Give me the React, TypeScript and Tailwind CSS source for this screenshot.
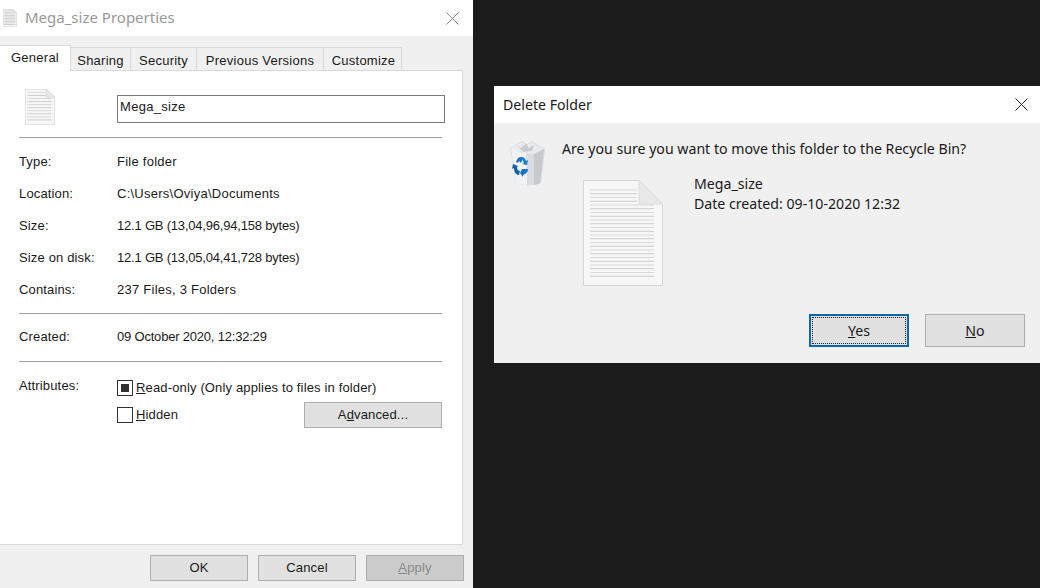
import { ReactNode } from "react";

const bigLines = Array.from({ length: 24 }, (_, i) => 10 + i * 3.75);
const smallLines = [10, 19, 28, 37, 46, 55, 64, 73, 82, 91];

const DocIcon = ({ className, lines = bigLines }: { className: string; lines?: number[] }) => (
  <svg viewBox="0 0 80 106" preserveAspectRatio="none" className={className}>
    <path d="M.5.5H56L79.5 24V105.5H.5Z" fill="#f7f7f7" stroke="#d6d6d6" vectorEffect="non-scaling-stroke" />
    <path d="M56 .5V24H79.5Z" fill="#e8e8e8" stroke="#dcdcdc" vectorEffect="non-scaling-stroke" />
    {lines.map((y, i) => (
      <path
        key={y}
        d={y < 24 ? `M7 ${y}H54` : `M7 ${y}H71`}
        stroke={i % 2 ? "#cdcdcd" : "#d9d9d9"}
        strokeWidth="1"
        vectorEffect="non-scaling-stroke"
      />
    ))}
  </svg>
);

const RecycleBin = () => (
  <svg viewBox="0 0 36 46" className="w-[36px] h-[46px]">
    <path d="M0 8 12 1l5 3 5-3 6 4 7 4-4 34c-6 3-18 3-25 0Z" fill="#d9dcde" />
    <path d="M1 8 12 2l5 3 5-3 5 4 7 3-10 5-14-1Z" fill="#e9ebec" />
    <path d="M7 5l4 3 5-4 3 4 5-3-2 6-9 1Z" fill="#c9cccf" />
    <path d="M1 8l10 5 5 .5L17 45c-5 0-8-1-11-2Z" fill="#f1f2f3" />
    <path d="M24 14 34 9l-4 34-6 2Z" fill="#c6cacd" />
    <path d="M6 22c1-3 2-5 5-5l2 1-2 5-2-2-1 2Z" fill="#1b74c4" />
    <path d="M12 17c2 0 3 1 4 4l2-1-1 5-5-1 2-1-2-4Z" fill="#1e7fd0" />
    <path d="M3 24l5 2-1 1c0 2 1 4 3 4l-1 4c-3 0-5-3-5-7l-2 1Z" fill="#135fa8" />
    <path d="M12 29h6c0 3-2 5-5 6v2l-3-4 2-4Z" fill="#1b74c4" />
  </svg>
);

const CloseX = ({ color }: { color: string }) => (
  <svg viewBox="0 0 13 13" className="w-[13px] h-[13px]">
    <path d="M.5.5l12 12M12.5.5l-12 12" stroke={color} strokeWidth="1" fill="none" />
  </svg>
);

const Row = ({
  label,
  children,
  numeric = false,
}: {
  label: string;
  children: ReactNode;
  numeric?: boolean;
}) => (
  <div className="flex h-[32px] items-center">
    <div className="w-[98px]">{label}</div>
    <div className={numeric ? "tracking-[-0.2px]" : "tracking-[0.25px]"}>{children}</div>
  </div>
);

const Rule = () => <div className="h-px bg-[#a0a0a0]" />;

const WinButton = ({
  children,
  className = "bg-[#e1e1e1]",
  width = "w-[98px]",
  height = "h-[26px]",
}: {
  children: ReactNode;
  className?: string;
  width?: string;
  height?: string;
}) => (
  <div className={`flex items-center justify-center border border-[#adadad] ${width} ${height} ${className}`}>
    {children}
  </div>
);

const tabs = [
  { name: "Sharing", width: "w-[60px]" },
  { name: "Security", width: "w-[66px]" },
  { name: "Previous Versions", width: "w-[127px]" },
  { name: "Customize", width: "w-[78px] pl-[2px]" },
];

export default function App() {
  return (
    <div className="flex w-[1040px] h-[588px] overflow-hidden bg-[#1b1b1b] text-[13px] tracking-[0.15px] text-[#1a1a1a] font-['Liberation_Sans',sans-serif]">
      {/* Properties window */}
      <div className="flex flex-col w-[473px] h-full shrink-0 bg-[#f0f0f0]">
        <div className="flex items-center h-[36px] bg-white pl-[3px] pr-[14px]">
          <DocIcon className="w-[14px] h-[18px]" lines={smallLines} />
          <span className="ml-[8px] -mt-[1px] text-[15px] tracking-normal text-[#999999] font-['Noto_Sans',sans-serif]">
            Mega_size Properties
          </span>
          <div className="ml-auto">
            <CloseX color="#8a8a8a" />
          </div>
        </div>

        <div className="flex items-end h-[34px] pr-[11px] tracking-[0.25px]">
          <div className="relative z-10 flex items-center justify-center w-[71px] h-[26px] -mb-px pb-[1px] bg-white border-t border-r border-[#d9d9d9]">
            General
          </div>
          {tabs.map((tab) => (
            <div
              key={tab.name}
              className={`flex items-center justify-center h-[23px] pt-[3px] border-t border-r border-[#d9d9d9] bg-[#f0f0f0] ${tab.width}`}
            >
              {tab.name}
            </div>
          ))}
        </div>

        <div className="w-[463px] h-[475px] bg-white border-t border-r border-b border-[#d9d9d9] pl-[19px] pr-[20px]">
          <div className="flex h-[66px] pt-[18px]">
            <DocIcon className="ml-[6px] w-[30px] h-[36px]" lines={smallLines} />
            <div className="ml-[62px] mt-[6px] flex items-center w-[328px] h-[28px] border border-[#7a7a7a] pl-[2px] pb-[4px] -mr-[3px] shrink-0 tracking-[0.3px]">
              Mega_size
            </div>
          </div>
          <Rule />
          <div className="pt-[8px] pb-[7px]">
            <Row label="Type:">File folder</Row>
            <Row label="Location:">C:\Users\Oviya\Documents</Row>
            <Row label="Size:" numeric>12.1 GB (13,04,96,94,158 bytes)</Row>
            <Row label="Size on disk:" numeric>12.1 GB (13,05,04,41,728 bytes)</Row>
            <Row label="Contains:">237 Files, 3 Folders</Row>
          </div>
          <Rule />
          <div className="pt-[7px] pb-[8px]">
            <Row label="Created:" numeric>09 October 2020, 12:32:29</Row>
          </div>
          <Rule />
          <div className="flex pt-[16px]">
            <div className="w-[98px] leading-[16px]">Attributes:</div>
            <div className="flex-1">
              <div className="flex items-center h-[18px] mt-[1px]">
                <span className="flex items-center justify-center w-[16px] h-[16px] border border-[#333333]">
                  <span className="w-[8px] h-[8px] bg-[#333333]" />
                </span>
                <span className="ml-[3px]">
                  <u>R</u>ead-only (Only applies to files in folder)
                </span>
              </div>
              <div className="flex items-center justify-between h-[26px] mt-[5px] pr-[1px]">
                <div className="flex items-center">
                  <span className="w-[16px] h-[16px] border border-[#333333]" />
                  <span className="ml-[3px]">
                    <u>H</u>idden
                  </span>
                </div>
                <div className="-mr-[1px]">
                  <WinButton width="w-[138px]">
                    <span>
                      A<u>d</u>vanced...
                    </span>
                  </WinButton>
                </div>
              </div>
            </div>
          </div>
        </div>

        <div className="flex justify-end gap-[10px] pt-[10px] pr-[9px]">
          <WinButton>OK</WinButton>
          <WinButton>Cancel</WinButton>
          <WinButton className="bg-[#cccccc] text-[#8a8a8a]">
            <span>
              <u>A</u>pply
            </span>
          </WinButton>
        </div>
      </div>

      {/* Delete confirmation */}
      <div className="flex flex-col ml-[21px] mt-[86px] w-[546px] h-[277px] shrink-0 bg-[#f0f0f0] text-[14.15px] tracking-normal font-['Noto_Sans',sans-serif]">
        <div className="flex items-center justify-between h-[37px] bg-white pl-[9px] pr-[12px]">
          <span>Delete Folder</span>
          <CloseX color="#222222" />
        </div>
        <div className="flex flex-1 flex-col">
          <div className="flex pt-[17px] pl-[16px]">
            <RecycleBin />
            <div className="ml-[16px] -mt-[1px] leading-[20px]">
              Are you sure you want to move this folder to the Recycle Bin?
            </div>
          </div>
          <div className="flex -mt-[6px] pl-[89px]">
            <DocIcon className="w-[80px] h-[106px]" />
            <div className="ml-[31px] leading-[20px] -mt-[6px]">
              <div>Mega_size</div>
              <div>Date created: 09-10-2020 12:32</div>
            </div>
          </div>
          <div className="flex justify-end gap-[16px] mt-[28px] pr-[15px]">
            <div className="flex items-center justify-center w-[100px] h-[33px] border-2 border-[#0a67a8] bg-[#e1e1e1] p-px">
              <div className="flex items-center justify-center w-full h-full border border-dotted border-[#222222]">
                <span>
                  <u>Y</u>es
                </span>
              </div>
            </div>
            <WinButton width="w-[100px]" height="h-[33px]">
              <span>
                <u>N</u>o
              </span>
            </WinButton>
          </div>
        </div>
      </div>
    </div>
  );
}
